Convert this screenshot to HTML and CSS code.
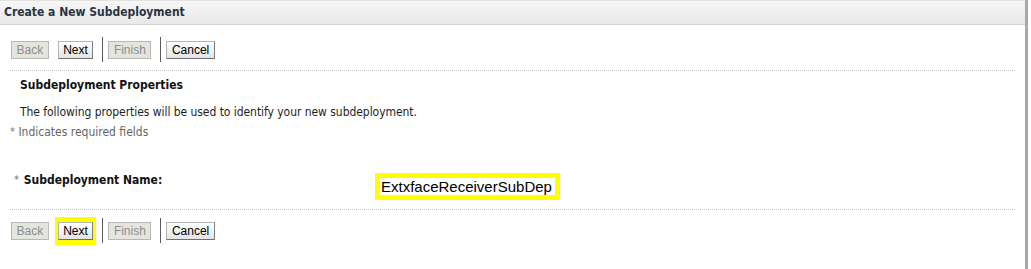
FILE: index.html
```html
<!DOCTYPE html>
<html>
<head>
<meta charset="utf-8">
<title>Create a New Subdeployment</title>
<link rel="stylesheet" href="styles.css">
</head>
<body>
<div class="panel">
  <div class="header">Create a New Subdeployment</div>

  <div class="toolbar">
    <button class="btn" disabled>Back</button>
    <button class="btn">Next</button>
    <span class="sep"></span>
    <button class="btn" disabled>Finish</button>
    <span class="sep"></span>
    <button class="btn">Cancel</button>
  </div>

  <div class="rule"></div>

  <div class="content">
    <h2 class="section-title">Subdeployment Properties</h2>
    <p class="intro">The following properties will be used to identify your new subdeployment.</p>
    <p class="required"><span class="star">*</span> Indicates required fields</p>

    <div class="field">
      <label class="field-label"><span class="star">*</span> Subdeployment Name:</label>
      <div class="highlight-box">
        <span class="field-value">ExtxfaceReceiverSubDep</span>
      </div>
    </div>
  </div>

  <div class="rule rule-bottom"></div>

  <div class="toolbar toolbar-bottom">
    <button class="btn" disabled>Back</button>
    <span class="highlight-btn"><button class="btn">Next</button></span>
    <span class="sep"></span>
    <button class="btn" disabled>Finish</button>
    <span class="sep"></span>
    <button class="btn">Cancel</button>
  </div>
</div>
</body>
</html>
```

FILE: styles.css
```css
html, body {
  margin: 0;
  padding: 0;
  background: #ffffff;
}

body {
  font-family: "DejaVu Sans Condensed", "DejaVu Sans", sans-serif;
  font-size: 12px;
  color: #222222;
}

.panel {
  width: 1025px;
  height: 269px;
  border-right: 3px solid #a9a9a9;
  box-sizing: content-box;
}

.header {
  height: 25px;
  line-height: 23px;
  padding-left: 4px;
  border-top: 1px solid #e2e2e2;
  border-bottom: 1px solid #d4d4d4;
  background: linear-gradient(#f7f7f7, #e8e8e8);
  font-weight: bold;
  font-size: 12px;
  color: #2a3441;
  box-sizing: border-box;
}

.toolbar {
  display: flex;
  align-items: center;
  height: 25px;
  margin-top: 12px;
  padding-left: 11px;
  gap: 9px;
}

.toolbar-bottom {
  margin-top: 8px;
}

.btn {
  font-family: "Liberation Sans", Arial, sans-serif;
  font-size: 12px;
  height: 18px;
  line-height: 16px;
  padding: 0 4.5px;
  margin: 0;
  color: #000000;
  background: linear-gradient(#ffffff, #e4e4e4);
  border: 1px solid;
  border-color: #b5b5b5 #7f7f7f #6f6f6f #b5b5b5;
  border-radius: 0;
}

.btn:disabled {
  color: #8c8c8c;
  background: #e5e5e0;
  border-color: #b9b9b4;
}

.sep {
  width: 1px;
  height: 25px;
  background: #5a5a5a;
  margin: 0 -4px 0 0;
}

.rule {
  height: 0;
  border-top: 1px dotted #bdbdbd;
  margin: 8px 10px 0 10px;
}

.rule-bottom {
  margin-top: 9px;
}

.content {
  padding-left: 20px;
}

.section-title {
  margin: 7px 0 0 0;
  font-size: 12px;
  line-height: 15px;
  font-weight: bold;
  color: #111111;
}

.intro {
  margin: 12px 0 0 0;
  line-height: 15px;
  letter-spacing: -0.05px;
  color: #1e1e1e;
}

.required {
  margin: 4px 0 0 -10px;
  line-height: 15px;
  color: #666666;
}

.star {
  color: #777777;
  font-size: 11px;
  vertical-align: 1px;
}

.field {
  display: flex;
  align-items: flex-start;
  margin-top: 32px;
  margin-left: -6px;
}

.field-label {
  width: 361px;
  line-height: 15px;
  font-weight: bold;
  color: #111111;
}

.field-label .star {
  font-weight: normal;
  margin-right: 1px;
}

.highlight-box {
  display: flex;
  align-items: center;
  width: 174px;
  height: 17px;
  padding: 0 0 0 1px;
  margin-top: 1px;
  border: 5px solid #ffff00;
  background: #ffffff;
}

.field-value {
  font-family: "Liberation Sans", Arial, sans-serif;
  font-size: 15px;
  color: #000000;
  line-height: 17px;
}

.highlight-btn {
  display: inline-flex;
  padding: 5px 3px;
  margin: -5px -3px;
  background: #ffff00;
}
```
